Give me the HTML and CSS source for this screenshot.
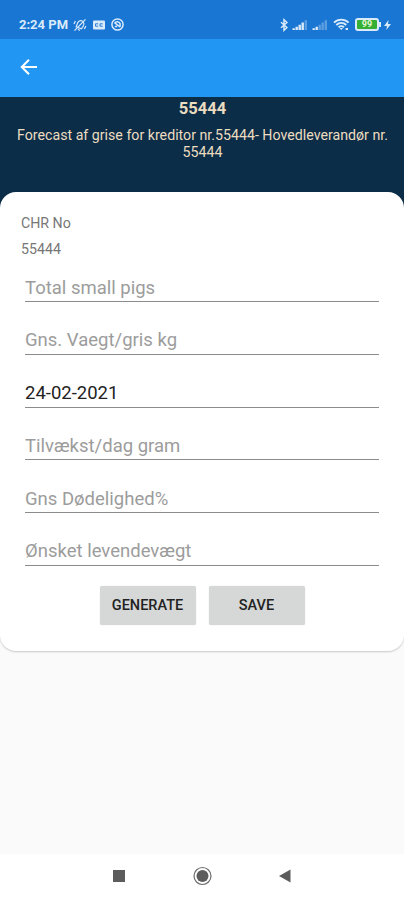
FILE: index.html
```html
<!DOCTYPE html>
<html lang="da">
<head>
    <title>Forecast</title>
    <meta charset="UTF-8">
    <meta name="viewport" content="width=device-width, initial-scale=1">
    <link rel="stylesheet" href="styles.css">
</head>
<body>
    <div class="screen">
        <div class="status-bar">
            <span class="time">2:24 PM</span>
            <svg class="icon-mute" width="14" height="14" viewBox="0 0 14 14" fill="none" stroke="currentColor" stroke-width="1.2">
                <path d="M3.2 8.8l1.6-4.2c1.2-2.4 4.2-2.6 5.6-.6 1 1.6.6 3.2-.4 4.6l-1.6 2.2zM5 11.2l1.8 1.2M1.5 12.6l11-11.2M1 6l1.4-3M12.8 8l-1.4 3"/>
            </svg>
            <svg class="icon-cc" width="12" height="10" viewBox="0 0 12 10">
                <rect x="0" y="0.5" width="12" height="9" rx="1" fill="currentColor"/>
                <path d="M5.2 3.8H2.5v2.4h2.7M9.7 3.8H7v2.4h2.7" fill="none" stroke="#1976d2" stroke-width="0.9"/>
            </svg>
            <svg class="icon-sync" width="13" height="13" viewBox="0 0 13 13" fill="none" stroke="currentColor" stroke-width="1.5">
                <circle cx="6.5" cy="6.5" r="5.6"/>
                <path d="M3.6 5c1.4-2 4.4-1.8 5.5.6v3.2M3.5 4.6l5.5 4.4M3.8 8.6h2.4"/>
            </svg>
            <div class="status-right">
                <svg class="icon-bluetooth" width="8" height="14" viewBox="0 0 8 14" fill="none" stroke="currentColor" stroke-width="1.5">
                    <path d="M1 4.2l6 5.3-3 2.8V1.7l3 2.8-6 5.3"/>
                </svg>
                <svg class="icon-signal" width="16" height="12" viewBox="0 0 16 12" fill="currentColor">
                    <path d="M.5 9.2h2.4V11H.5zM3.5 7.8h2.4V11H3.5zM6.5 5.8h2.4V11H6.5zM9.5 3.6h2.4V11H9.5z"/>
                    <path d="M12.6 1.2H15V11h-2.4z" opacity="0.35"/>
                </svg>
                <svg class="icon-signal" width="16" height="12" viewBox="0 0 16 12" fill="currentColor">
                    <path d="M.5 9.2h2.4V11H.5zM3.5 7.8h2.4V11H3.5z"/>
                    <path d="M6.5 5.8h2.4V11H6.5zM9.5 3.6h2.4V11H9.5zM12.6 1.2H15V11h-2.4z" opacity="0.35"/>
                </svg>
                <svg class="icon-wifi" width="17" height="13" viewBox="0 0 17 13" fill="none" stroke="currentColor" stroke-width="1.9">
                    <path d="M1 4.6c4.2-4 10.4-4 14.6 0M3.3 7c3-2.8 7-2.8 10 0M5.6 9.3c1.6-1.4 3.8-1.4 5.4 0"/>
                    <path d="M6.5 10h3.6l-1.8 2zM12.6 10h2.4v2h-2.4z" fill="currentColor" stroke="none"/>
                </svg>
                <span class="battery">99</span>
                <svg class="icon-bolt" width="7" height="12" viewBox="0 0 7 12" fill="currentColor">
                    <path d="M4.5 1L0 7h3L2.3 11 7 5H4z"/>
                </svg>
            </div>
        </div>

        <div class="toolbar">
            <svg class="icon-back" width="18" height="18" viewBox="0 0 18 18" fill="none" stroke="currentColor" stroke-width="2.1">
                <path d="M17 9H2.5M9 1.8L1.8 9 9 16.2"/>
            </svg>
        </div>

        <div class="banner">
            <h1>55444</h1>
            <p>Forecast af grise for kreditor nr.55444- Hovedleverandør nr. 55444</p>
        </div>

        <form class="card">
            <div class="label">CHR No</div>
            <div class="label">55444</div>
            <div class="fields">
                <input type="text" placeholder="Total small pigs">
                <input type="text" placeholder="Gns. Vaegt/gris kg">
                <input type="text" value="24-02-2021">
                <input type="text" placeholder="Tilvækst/dag gram">
                <input type="text" placeholder="Gns Dødelighed%">
                <input type="text" placeholder="Ønsket levendevægt">
            </div>
            <div class="buttons">
                <button type="button">GENERATE</button>
                <button type="button">SAVE</button>
            </div>
        </form>

        <div class="nav-bar">
            <svg width="14" height="14" viewBox="0 0 14 14">
                <rect x="1" y="1" width="12" height="12" fill="#5c5c5c"/>
            </svg>
            <svg width="20" height="20" viewBox="0 0 20 20">
                <circle cx="10.5" cy="10" r="8.5" fill="none" stroke="#6c6c6c" stroke-width="1.2"/>
                <circle cx="10.5" cy="10" r="6" fill="#5c5c5c"/>
            </svg>
            <svg width="14" height="14" viewBox="0 0 14 14">
                <path d="M1 7l11.5-6.5v13z" fill="#5c5c5c"/>
            </svg>
        </div>
    </div>
</body>
</html>
```

FILE: styles.css
```css
* {
    box-sizing: border-box;
}
body {
    margin: 0;
    font-family: Roboto, "Liberation Sans", sans-serif;
    background-color: #fafafa;
}
.screen {
    display: flex;
    flex-direction: column;
    width: 404px;
    height: 900px;
    overflow: hidden;
}
.status-bar {
    display: flex;
    align-items: center;
    height: 39px;
    padding: 10px 13px 0 19px;
    background-color: #1976d2;
    color: #d9ebfb;
}
.time {
    width: 49px;
    margin-right: 5px;
    font-size: 13px;
    font-weight: bold;
    white-space: nowrap;
}
.icon-cc {
    margin: 0 6px 0 6px;
}
.status-right {
    display: flex;
    align-items: center;
    margin-left: auto;
}
.icon-signal {
    margin-left: 4px;
}
.icon-wifi {
    margin-left: 5px;
}
.battery {
    position: relative;
    width: 24px;
    height: 13px;
    margin: 0 5px 0 5px;
    border: 2px solid #d9ebfb;
    border-radius: 3px;
    background-color: #35b035;
    color: #e5f7d5;
    font-size: 9px;
    font-weight: bold;
    line-height: 9px;
    text-align: center;
}
.battery::after {
    content: "";
    position: absolute;
    top: 2px;
    right: -4px;
    width: 2px;
    height: 5px;
    background-color: #d9ebfb;
}
.toolbar {
    display: flex;
    align-items: center;
    height: 58px;
    padding: 0 20px 2px;
    background-color: #2196f3;
    color: white;
}
.banner {
    height: 119px;
    padding: 2px 11px 0 12px;
    background-color: #0b2d48;
    color: #ecdcc0;
    text-align: center;
}
.banner h1 {
    margin: 0;
    font-size: 16.5px;
    line-height: 20px;
}
.banner p {
    margin: 8px 0 0;
    font-size: 14.2px;
    line-height: 17px;
}
.card {
    height: 459px;
    margin-top: -24px;
    padding: 19px 21px 0;
    border-radius: 16px;
    background-color: white;
    box-shadow: 0 1px 2px rgba(0,0,0,0.2);
}
.label {
    height: 25.5px;
    color: #777;
    font-size: 14.2px;
    line-height: 25px;
}
.fields {
    display: flex;
    flex-direction: column;
    gap: 16.8px;
    padding: 4px 4px 0;
}
.fields input {
    width: 100%;
    height: 36px;
    padding: 8px 0 0;
    border: 0;
    border-bottom: 1px solid #8c8c8c;
    background: none;
    color: #222;
    font-family: inherit;
    font-size: 18.5px;
    outline: none;
}
.fields input::placeholder {
    color: #9c9c9c;
}
.buttons {
    display: flex;
    justify-content: center;
    gap: 13px;
    margin-top: 20px;
}
.buttons button {
    width: 96px;
    height: 39px;
    padding: 0;
    border: 0;
    border-radius: 2px;
    background-color: #d6d8d7;
    color: #222;
    font-family: inherit;
    font-size: 14.5px;
    font-weight: 500;
    box-shadow: 0 0 1px rgba(0,0,0,0.2);
}
.nav-bar {
    display: flex;
    align-items: center;
    justify-content: space-between;
    height: 46px;
    margin-top: auto;
    padding: 0 112px 2px;
    background-color: white;
}
```
